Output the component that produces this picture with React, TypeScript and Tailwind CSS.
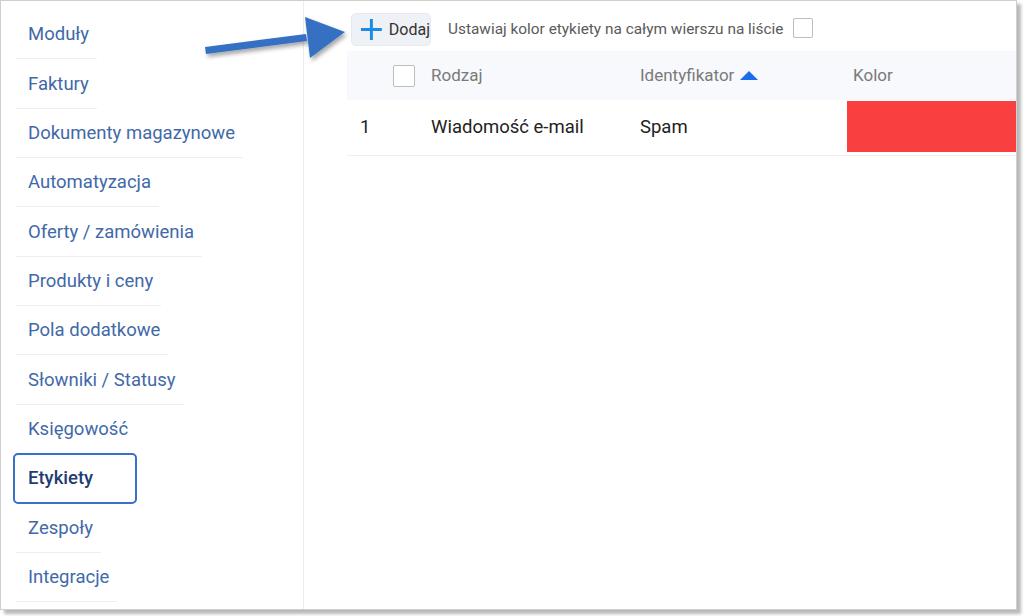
import React from "react";

const menu = [
    "Moduły",
    "Faktury",
    "Dokumenty magazynowe",
    "Automatyzacja",
    "Oferty / zamówienia",
    "Produkty i ceny",
    "Pola dodatkowe",
    "Słowniki / Statusy",
    "Księgowość",
    "Etykiety",
    "Zespoły",
    "Integracje",
];

const Arrow = () => (
    <svg
        className="absolute left-0 top-0 pointer-events-none"
        width="360"
        height="80"
        viewBox="0 0 360 80"
    >
        <defs>
            <filter id="sh" x="-20%" y="-50%" width="140%" height="200%">
                <feDropShadow dx="2" dy="3" stdDeviation="2" floodColor="#000" floodOpacity="0.35" />
            </filter>
        </defs>
        <g filter="url(#sh)" fill="#3670c2">
            <polygon points="205,47 306,34 307,41 206,54" />
            <polygon points="305,17 345,32 310,58" />
        </g>
    </svg>
);

const Sidebar = () => (
    <div className="w-[303px] shrink-0 border-r border-[#ececec] pl-[15px] pt-[9px]">
        {menu.map((item) =>
            item === "Etykiety" ? (
                <div
                    key={item}
                    className="-ml-[3px] -mt-[1px] flex h-[51px] w-[124px] items-center rounded-[5px] border-2 border-[#3a70c6] pl-[13px] pt-[1px] -mb-[0.67px] text-[18.5px] font-medium text-[#1f3d72]"
                >
                    {item}
                </div>
            ) : (
                <div
                    key={item}
                    className={
                        "flex h-[49.33px] w-fit items-center pl-3 pr-[8px] pt-[2px] text-[18.5px] text-[#4169a8] " +
                        (item === "Księgowość" ? "border-b border-transparent" : "border-b border-[#efefef]")
                    }
                >
                    {item}
                </div>
            )
        )}
    </div>
);

const Checkbox = ({ size }: { size: string }) => (
    <div className={`${size} rounded-[2px] border border-[#bdbdbd] bg-white`} />
);

const Main = () => (
    <div className="flex-1 pl-[43px] pt-[12px]">
        <div className="flex items-center">
            <button className="ml-[4px] flex h-[33px] w-[80px] items-center gap-[6px] rounded-[5px] border border-[#e6e9ee] bg-[#eef1f6] pl-[8px]">
                <svg width="23" height="23" viewBox="0 0 23 23">
                    <path d="M11.5 1 V22 M1 11.5 H22" stroke="#1d8ce0" strokeWidth="3" />
                </svg>
                <span className="text-[16px] text-[#333]">Dodaj</span>
            </button>
            <span className="ml-[17px] text-[15.4px] text-[#5a5a5a]">Ustawiaj kolor etykiety na całym wierszu na liście</span>
            <div className="ml-[10px] -mt-[4px]">
                <Checkbox size="h-[20px] w-[20px]" />
            </div>
        </div>
        <div className="mt-[5px] grid h-[49px] grid-cols-[84px_209px_207px_1fr] items-center bg-[#f7f9fc] text-[17px] text-[#7a7a7a]">
            <div className="pl-[46px]">
                <Checkbox size="h-[22px] w-[22px]" />
            </div>
            <div>Rodzaj</div>
            <div className="flex items-center gap-[6px]">
                Identyfikator
                <svg width="18" height="9" viewBox="0 0 18 9">
                    <polygon points="9,0 18,9 0,9" fill="#1a6fe8" />
                </svg>
            </div>
            <div className="pl-[6px]">Kolor</div>
        </div>
        <div className="grid h-[56px] grid-cols-[84px_209px_207px_1fr] border-b border-[#eeeeee] pt-[1px] pb-[3px] text-[18.5px] text-[#222]">
            <div className="flex items-center pl-[13px] pt-[3px]">1</div>
            <div className="flex items-center pt-[3px]">Wiadomość e-mail</div>
            <div className="flex items-center pt-[3px]">Spam</div>
            <div className="bg-[#f93f3f]" />
        </div>
    </div>
);

export default function App() {
    return (
        <div className="relative h-[616px] w-[1024px] overflow-hidden bg-white" style={{ fontFamily: "Roboto, sans-serif" }}>
            <div className="flex h-[610px] w-[1017px] border border-[#cfcfcf] bg-white shadow-[4px_4px_3px_rgba(0,0,0,0.28)]">
                <Sidebar />
                <Main />
            </div>
            <Arrow />
        </div>
    );
}
